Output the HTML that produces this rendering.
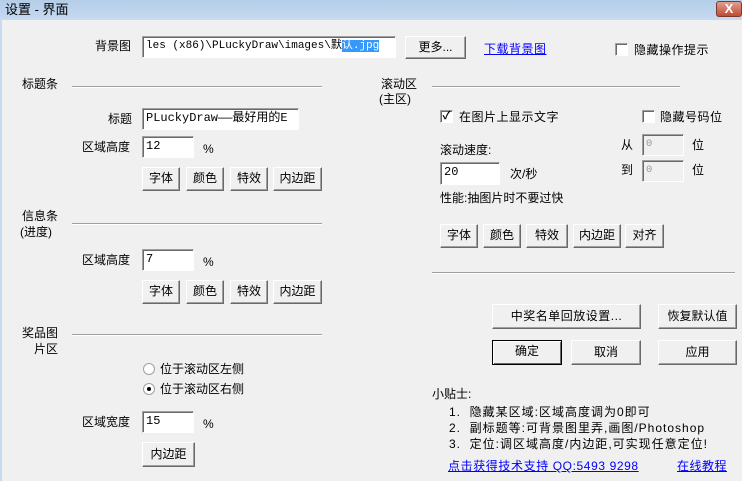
<!DOCTYPE html>
<html><head><meta charset="utf-8"><style>
*{margin:0;padding:0;box-sizing:border-box}
body{width:742px;height:481px;background:#f0f0f0;font:12px "Liberation Sans","Noto Sans CJK SC",sans-serif;color:#000;position:relative;overflow:hidden}
.a{position:absolute;white-space:nowrap;line-height:14px}
#tb{position:absolute;left:0;top:0;width:742px;height:20px;background:linear-gradient(#b4cde8,#c6daf0)}
#lb{position:absolute;left:0;top:20px;width:2px;height:461px;background:#c6daf0}
.x{position:absolute;left:716px;top:1px;width:26px;height:16px;background:linear-gradient(#e0a090,#c24a32);border:1px solid #7a3a30;border-radius:3px;color:#fff;font-weight:bold;text-align:center;line-height:13px;font-size:13px}
.tx{position:absolute;background:#fff;border:1px solid;border-color:#a0a0a0 #fff #fff #a0a0a0;box-shadow:inset 1px 1px 0 #696969;padding:1px 0 0 3px;line-height:16px;font-family:"Liberation Mono","Noto Sans CJK SC",monospace;font-size:10.5px;white-space:nowrap;overflow:hidden}
.ds{background:#f0f0f0;color:#999}
.bt{position:absolute;background:#f0f0f0;border:1px solid;border-color:#fff #696969 #696969 #fff;box-shadow:inset -1px -1px 0 #a0a0a0;text-align:center;font-size:12px}
.ln{position:absolute;height:2px;border-top:1px solid #a0a0a0;border-bottom:1px solid #fff}
.cb{position:absolute;width:13px;height:13px;background:#fff;border:1px solid;border-color:#a0a0a0 #fff #fff #a0a0a0;box-shadow:inset 1px 1px 0 #696969;font-size:11px;line-height:11px;text-align:center}
.rd{position:absolute;width:12px;height:12px;border-radius:50%;background:#fff;border:1px solid #a0a0a0}
.lk{color:#0000ff;text-decoration:underline}
.tp{letter-spacing:1px}
</style></head><body>
<div id="tb"></div><div id="lb"></div>
<div class="a" style="left:5px;top:3px;font-size:13px">设置 - 界面</div>
<div class="x">X</div>

<div class="a" style="left:95px;top:39px">背景图</div>
<div class="tx" style="left:142px;top:36px;width:254px;height:22px;font-size:11px">les (x86)\PLuckyDraw\images\默<span style="background:#3399ff;color:#fff">认.jpg</span></div>
<div class="bt" style="left:405px;top:36px;width:61px;height:23px;line-height:20px">更多...</div>
<div class="a lk" style="left:484px;top:42px;letter-spacing:0.5px">下载背景图</div>
<div class="cb" style="left:615px;top:43px"></div>
<div class="a" style="left:634px;top:43px;letter-spacing:0.5px">隐藏操作提示</div>

<div class="a" style="left:22px;top:77px">标题条</div>
<div class="ln" style="left:72px;top:86px;width:250px"></div>

<div class="a" style="left:108px;top:112px">标题</div>
<div class="tx" style="left:142px;top:108px;width:157px;height:22px;font-size:12px">PLuckyDraw——最好用的E</div>
<div class="a" style="left:82px;top:140px">区域高度</div>
<div class="tx" style="left:142px;top:136px;width:52px;height:22px;font-size:12px">12</div>
<div class="a" style="left:203px;top:142px">%</div>
<div class="bt" style="left:142px;top:167px;width:38px;height:24px;line-height:21px">字体</div>
<div class="bt" style="left:186px;top:167px;width:38px;height:24px;line-height:21px">颜色</div>
<div class="bt" style="left:230px;top:167px;width:38px;height:24px;line-height:21px">特效</div>
<div class="bt" style="left:273px;top:167px;width:49px;height:24px;line-height:21px">内边距</div>

<div class="a" style="left:22px;top:209px">信息条</div>
<div class="a" style="left:20px;top:225px">(进度)</div>
<div class="ln" style="left:72px;top:223px;width:250px"></div>
<div class="a" style="left:82px;top:253px">区域高度</div>
<div class="tx" style="left:142px;top:249px;width:52px;height:22px;font-size:12px">7</div>
<div class="a" style="left:203px;top:255px">%</div>
<div class="bt" style="left:142px;top:280px;width:38px;height:24px;line-height:21px">字体</div>
<div class="bt" style="left:186px;top:280px;width:38px;height:24px;line-height:21px">颜色</div>
<div class="bt" style="left:230px;top:280px;width:38px;height:24px;line-height:21px">特效</div>
<div class="bt" style="left:273px;top:280px;width:49px;height:24px;line-height:21px">内边距</div>

<div class="a" style="left:22px;top:326px">奖品图</div>
<div class="a" style="left:34px;top:342px">片区</div>
<div class="ln" style="left:72px;top:334px;width:250px"></div>
<div class="rd" style="left:143px;top:363px"></div>
<div class="a" style="left:160px;top:362px">位于滚动区左侧</div>
<div class="rd" style="left:143px;top:383px"></div>
<div style="position:absolute;left:147px;top:387px;width:4px;height:4px;background:#000;border-radius:50%"></div>
<div class="a" style="left:160px;top:382px">位于滚动区右侧</div>
<div class="a" style="left:82px;top:415px">区域宽度</div>
<div class="tx" style="left:142px;top:411px;width:52px;height:22px;font-size:12px">15</div>
<div class="a" style="left:203px;top:417px">%</div>
<div class="bt" style="left:142px;top:442px;width:53px;height:25px;line-height:22px">内边距</div>

<div class="a" style="left:381px;top:77px">滚动区</div>
<div class="a" style="left:379px;top:92px">(主区)</div>
<div class="ln" style="left:432px;top:86px;width:248px"></div>
<div class="cb" style="left:440px;top:110px;font-weight:bold">✓</div>
<div class="a" style="left:459px;top:110px;letter-spacing:0.5px">在图片上显示文字</div>
<div class="cb" style="left:642px;top:110px"></div>
<div class="a" style="left:660px;top:110px;letter-spacing:0.5px">隐藏号码位</div>
<div class="a" style="left:621px;top:138px">从</div>
<div class="tx ds" style="left:642px;top:134px;width:42px;height:22px">0</div>
<div class="a" style="left:692px;top:138px">位</div>
<div class="a" style="left:621px;top:163px">到</div>
<div class="tx ds" style="left:642px;top:160px;width:42px;height:22px">0</div>
<div class="a" style="left:692px;top:163px">位</div>
<div class="a" style="left:440px;top:143px">滚动速度:</div>
<div class="tx" style="left:440px;top:162px;width:60px;height:23px;font-size:12px">20</div>
<div class="a" style="left:510px;top:167px">次/秒</div>
<div class="a" style="left:440px;top:191px">性能:抽图片时不要过快</div>
<div class="bt" style="left:440px;top:224px;width:38px;height:24px;line-height:21px">字体</div>
<div class="bt" style="left:483px;top:224px;width:38px;height:24px;line-height:21px">颜色</div>
<div class="bt" style="left:526px;top:224px;width:42px;height:24px;line-height:21px">特效</div>
<div class="bt" style="left:573px;top:224px;width:48px;height:24px;line-height:21px">内边距</div>
<div class="bt" style="left:625px;top:224px;width:39px;height:24px;line-height:21px">对齐</div>
<div class="ln" style="left:432px;top:272px;width:303px"></div>

<div class="bt" style="left:492px;top:304px;width:149px;height:25px;line-height:22px;letter-spacing:0.5px">中奖名单回放设置...</div>
<div class="bt" style="left:658px;top:304px;width:79px;height:25px;line-height:22px">恢复默认值</div>
<div class="bt" style="left:492px;top:340px;width:70px;height:25px;line-height:20px;border:1px solid #000;box-shadow:inset 1px 1px 0 #fff,inset -1px -1px 0 #696969">确定</div>
<div class="bt" style="left:571px;top:340px;width:70px;height:25px;line-height:22px">取消</div>
<div class="bt" style="left:658px;top:340px;width:79px;height:25px;line-height:22px">应用</div>

<div class="a" style="left:432px;top:387px">小贴士:</div>
<div class="a tp" style="left:449px;top:405px">1.&nbsp; 隐藏某区域:区域高度调为0即可</div>
<div class="a tp" style="left:449px;top:421px">2.&nbsp; 副标题等:可背景图里弄,画图/Photoshop</div>
<div class="a tp" style="left:449px;top:437px">3.&nbsp; 定位:调区域高度/内边距,可实现任意定位!</div>
<div class="a lk" style="left:448px;top:459px;letter-spacing:0.6px">点击获得技术支持 QQ:5493 9298</div>
<div class="a lk" style="left:677px;top:459px;letter-spacing:0.5px">在线教程</div>
</body></html>
